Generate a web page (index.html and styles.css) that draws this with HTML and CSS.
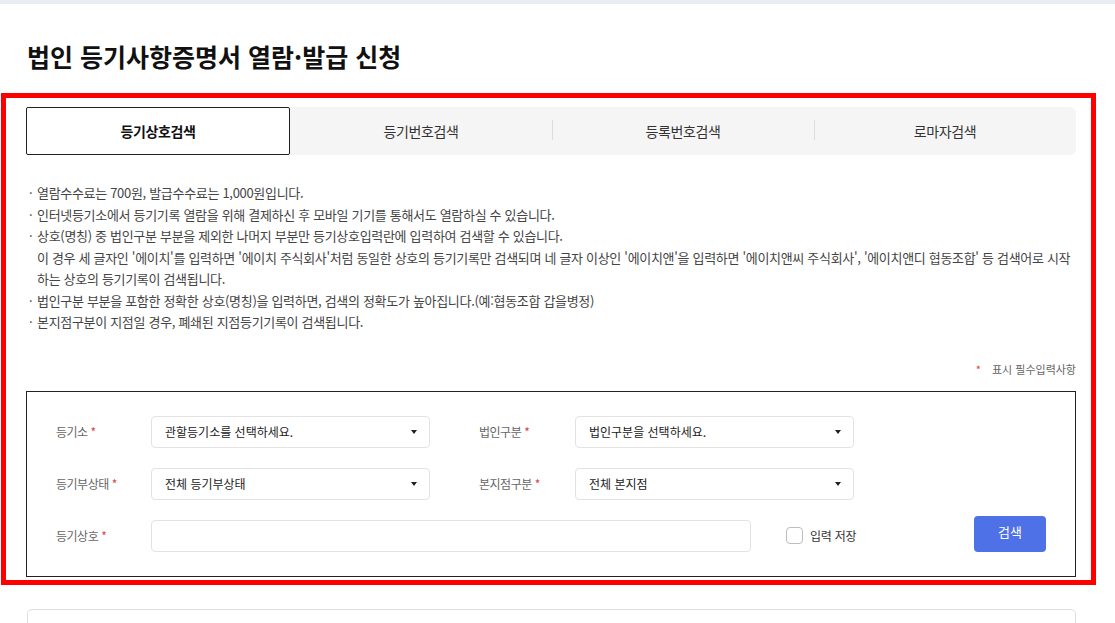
FILE: index.html
```html
<!DOCTYPE html>
<html lang="ko">
<head>
<meta charset="utf-8">
<title>법인 등기사항증명서 열람·발급 신청</title>
<link rel="stylesheet" href="styles.css">
</head>
<body>
<div class="topbar"></div>
<h1 class="page-title">법인 등기사항증명서 열람·발급 신청</h1>

<section class="highlight">
  <nav class="tabs">
    <a class="tab active">등기상호검색</a>
    <a class="tab">등기번호검색</a>
    <a class="tab sep">등록번호검색</a>
    <a class="tab sep">로마자검색</a>
  </nav>

  <ul class="notice">
    <li>열람수수료는 700원, 발급수수료는 1,000원입니다.</li>
    <li>인터넷등기소에서 등기기록 열람을 위해 결제하신 후 모바일 기기를 통해서도 열람하실 수 있습니다.</li>
    <li>상호(명칭) 중 법인구분 부분을 제외한 나머지 부분만 등기상호입력란에 입력하여 검색할 수 있습니다.<br>이 경우 세 글자인 '에이치'를 입력하면 '에이치 주식회사'처럼 동일한 상호의 등기기록만 검색되며 네 글자 이상인 '에이치앤'을 입력하면 '에이치앤씨 주식회사', '에이치앤디 협동조합' 등 검색어로 시작하는 상호의 등기기록이 검색됩니다.</li>
    <li>법인구분 부분을 포함한 정확한 상호(명칭)을 입력하면, 검색의 정확도가 높아집니다.(예:협동조합 갑을병정)</li>
    <li>본지점구분이 지점일 경우, 폐쇄된 지점등기기록이 검색됩니다.</li>
  </ul>

  <p class="required-note"><span class="req">*</span> 표시 필수입력사항</p>

  <form class="search-form">
    <div class="row">
      <label class="lbl">등기소 <span class="req">*</span></label>
      <div class="select"><span>관할등기소를 선택하세요.</span><i class="caret"></i></div>
      <label class="lbl lbl2">법인구분 <span class="req">*</span></label>
      <div class="select"><span>법인구분을 선택하세요.</span><i class="caret"></i></div>
    </div>
    <div class="row">
      <label class="lbl">등기부상태 <span class="req">*</span></label>
      <div class="select"><span>전체 등기부상태</span><i class="caret"></i></div>
      <label class="lbl lbl2">본지점구분 <span class="req">*</span></label>
      <div class="select"><span>전체 본지점</span><i class="caret"></i></div>
    </div>
    <div class="row row-last">
      <label class="lbl">등기상호 <span class="req">*</span></label>
      <div class="text-input"></div>
      <label class="save"><span class="checkbox"></span>입력 저장</label>
      <button type="button" class="btn-search">검색</button>
    </div>
  </form>
</section>

<div class="result-card"></div>
</body>
</html>
```

FILE: styles.css
```css
* { box-sizing: border-box; }

html, body {
  margin: 0;
  padding: 0;
  background: #fff;
}

body {
  font-family: "Noto Sans CJK KR", "Noto Sans", sans-serif;
  color: #222;
  letter-spacing: -0.015em;
  overflow: hidden;
}

.topbar {
  height: 4px;
  background: #e9ecf3;
}

.page-title {
  margin: 34px 0 19px 27px;
  font-size: 25px;
  line-height: 36px;
  font-weight: 700;
  color: #111;
  letter-spacing: 0;
}

.highlight {
  margin-left: 1px;
  width: 1095px;
  border: 5px solid #ff0000;
  padding: 9px 15px 3px 20px;
}

/* tabs */
.tabs {
  display: grid;
  grid-template-columns: 264px 1fr 1fr 1fr;
  height: 48px;
  background: #f5f5f5;
  border-radius: 0 6px 6px 0;
}

.tab {
  display: flex;
  align-items: center;
  justify-content: center;
  font-size: 14px;
  color: #333;
  position: relative;
  letter-spacing: -0.03em;
}

.tab.active {
  background: #fff;
  border: 1px solid #222;
  border-radius: 2px;
  font-weight: 700;
  color: #111;
}

.tab.sep::before {
  content: "";
  position: absolute;
  left: 0;
  top: 13px;
  height: 20px;
  width: 1px;
  background: #dcdcdc;
}

/* notice list */
.notice {
  list-style: none;
  margin: 27px 0 0;
  padding: 0;
  font-size: 13px;
  line-height: 21.5px;
  color: #444;
  letter-spacing: -0.024em;
}

.notice li {
  padding-left: 11px;
  text-indent: -11px;
}

.notice li::before {
  content: "·";
  display: inline-block;
  width: 8px;
  margin-left: 3px;
  text-indent: 0;
}

.required-note {
  margin: 28px 0 14px;
  text-align: right;
  font-size: 11px;
  line-height: 16px;
  color: #666;
  letter-spacing: 0;
}

.required-note .req {
  margin-right: 8px;
}

.req {
  color: #e0413f;
}

/* form */
.search-form {
  border: 1px solid #222;
  padding: 24px 29px 24px 29px;
  display: flex;
  flex-direction: column;
  gap: 20px;
}

.row {
  display: flex;
  align-items: center;
  height: 32px;
}

.lbl {
  width: 95px;
  font-size: 12px;
  color: #666;
  letter-spacing: -0.04em;
}

.lbl2 {
  margin-left: 49px;
  width: 96px;
}

.select {
  width: 279px;
  height: 32px;
  border: 1px solid #e3e3e3;
  border-radius: 4px;
  display: flex;
  align-items: center;
  justify-content: space-between;
  padding: 0 12px 0 13px;
  font-size: 12px;
  color: #222;
  letter-spacing: 0;
}

.caret {
  width: 0;
  height: 0;
  border-left: 3.5px solid transparent;
  border-right: 3.5px solid transparent;
  border-top: 4.5px solid #222;
}

.row-last {
  align-items: flex-end;
}

.row-last .lbl {
  align-self: center;
}

.text-input {
  width: 600px;
  height: 32px;
  border: 1px solid #e3e3e3;
  border-radius: 4px;
}

.save {
  margin-left: 35px;
  height: 32px;
  display: flex;
  align-items: center;
  gap: 7px;
  font-size: 12px;
  color: #333;
}

.checkbox {
  width: 17px;
  height: 17px;
  border: 1px solid #bdbdbd;
  border-radius: 4px;
  background: #fff;
}

.btn-search {
  margin-left: auto;
  width: 72px;
  height: 36px;
  border: 0;
  border-radius: 4px;
  background: #4e71e8;
  color: #fff;
  font-family: inherit;
  font-size: 13px;
  letter-spacing: 0;
  padding: 0 0 4px;
}

.result-card {
  margin: 24px 0 0 27px;
  width: 1049px;
  height: 60px;
  border: 1px solid #dedede;
  border-radius: 5px 5px 0 0;
}
```
